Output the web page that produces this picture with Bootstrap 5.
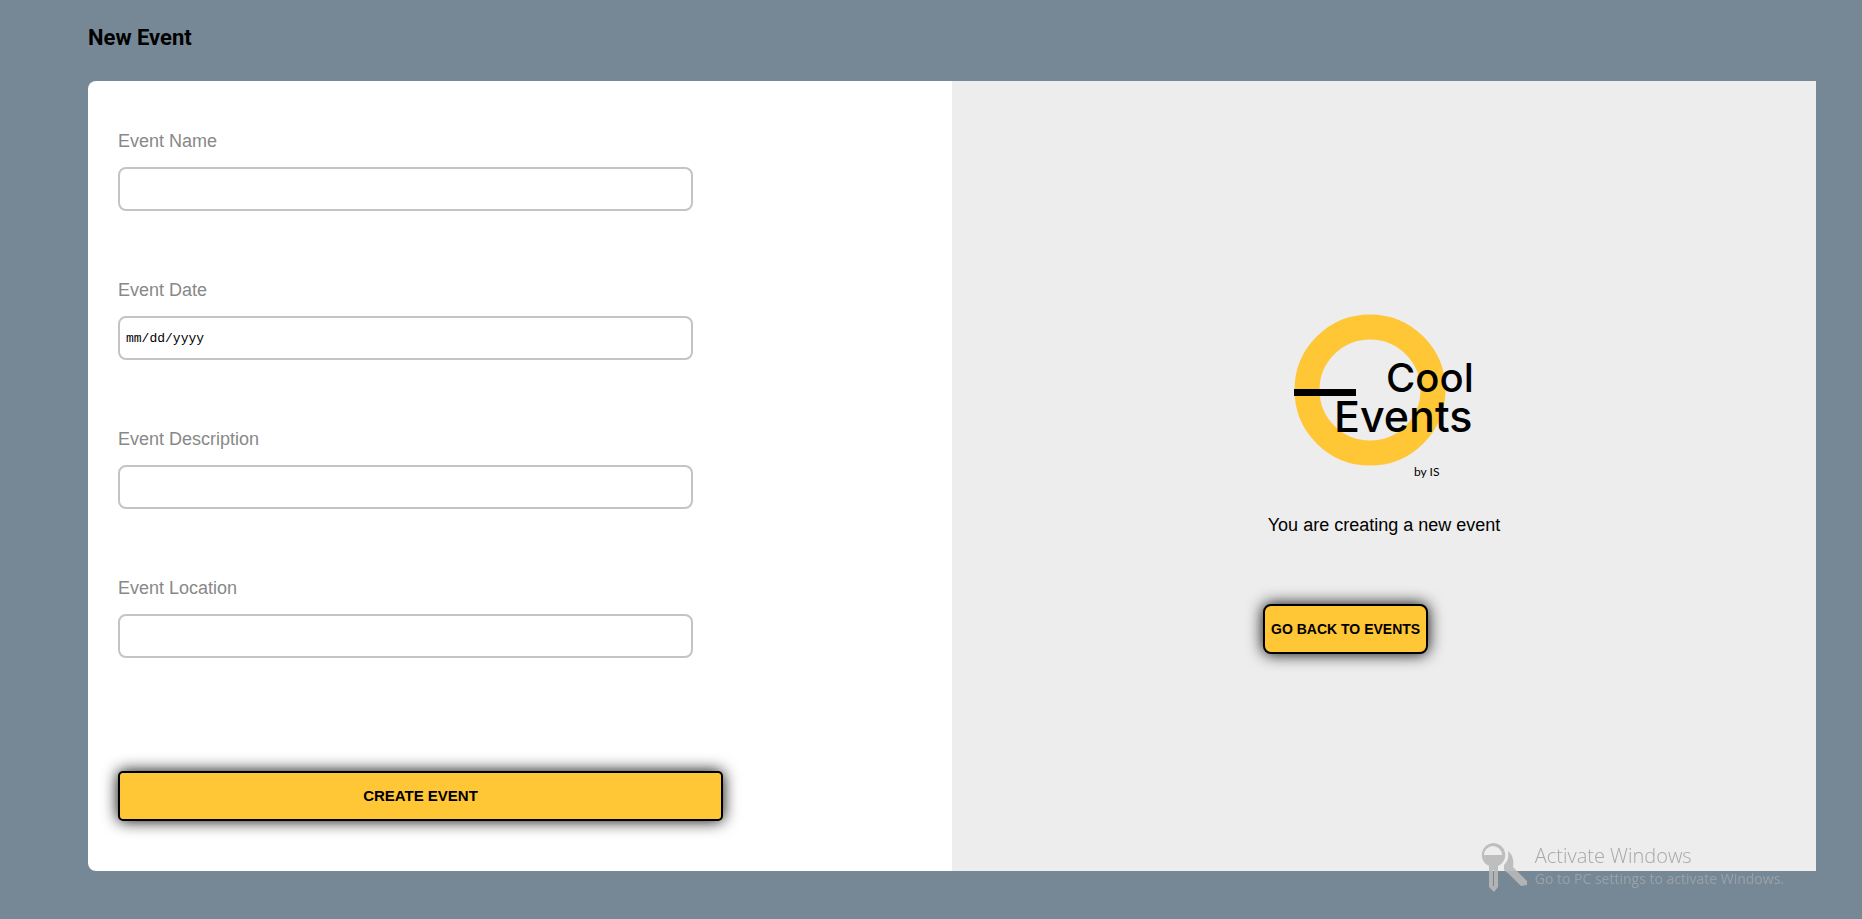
<!DOCTYPE html>
<html lang="en">
<head>
<meta charset="utf-8">
<meta name="viewport" content="width=device-width, initial-scale=1">
<title>New Event</title>
<link href="https://cdn.jsdelivr.net/npm/bootstrap@5.3.0/dist/css/bootstrap.min.css" rel="stylesheet">
<style>
  body { background: #768896; color: #000; font-family: "Liberation Sans", Arial, sans-serif; font-size: 18px; line-height: 24px; }
  .page { padding: 22px 46px 48px 88px; }
  .page-title { font: 700 22px/32px Roboto, sans-serif; margin-bottom: 27px; }
  .event-form { background: #fff; border-radius: 8px 0 0 8px; padding: 48px 0 50px; }
  .event-form form { margin-left: 30px; }
  .field { margin-bottom: 67px; width: 69%; }
  .field .form-label { color: #888; margin-bottom: 14px; display: block; }
  .field .form-control { height: 44px; border: 2px solid #c4c4c4; border-radius: 8px; padding: 1px 6px; color: #000; background: #fff; }
  .field .form-control[type=date] { font: 13px "Liberation Mono", monospace; }
  .form-control::-webkit-calendar-picker-indicator { display: none; }
  .btn-event { height: 50px; background: #ffc636; border: 2px solid #000; color: #000; font-weight: 700; text-transform: uppercase; padding: 0 6px; line-height: 20px; box-shadow: 0 0 16px #000; }
  .btn-event:hover { background: #ffb900; border-color: #000; color: #000; }
  .btn-create { width: 605px; max-width: 100%; font-size: 15px; border-radius: 5px; margin-top: 46px; }
  .btn-back { font-size: 14px; border-radius: 8px; margin-top: 67px; white-space: nowrap; }
  .side { background: #ededed; }
  .side-content { width: 28%; min-width: 240px; }
  .side-logo { margin-bottom: 15px; }
  .watermark { position: fixed; right: 78px; bottom: 24px; color: #b8b8b8; opacity: .9; font-family: "Open Sans", "Segoe UI", sans-serif; pointer-events: none; }
  .watermark-title { font-size: 20px; font-weight: 300; line-height: 26px; color: #a0a0a0; }
  .watermark-note { font-size: 14px; line-height: 20px; opacity: .6; }
</style>
</head>
<body>
<main class="page">
  <h1 class="page-title">New Event</h1>
  <div class="row g-0">
    <section class="col-6 event-form">
      <form>
        <div class="field">
          <label class="form-label" for="name">Event Name</label>
          <input class="form-control" type="text" id="name">
        </div>
        <div class="field">
          <label class="form-label" for="date">Event Date</label>
          <input class="form-control" type="date" id="date">
        </div>
        <div class="field">
          <label class="form-label" for="description">Event Description</label>
          <input class="form-control" type="text" id="description">
        </div>
        <div class="field">
          <label class="form-label" for="location">Event Location</label>
          <input class="form-control" type="text" id="location">
        </div>
        <button type="submit" class="btn btn-event btn-create">Create event</button>
      </form>
    </section>
    <aside class="col-6 side d-flex align-items-center justify-content-center">
      <div class="side-content d-flex flex-column">
        <svg class="side-logo align-self-center" width="182" height="200" viewBox="0 0 182 200" role="img" aria-label="Cool Events by IS">
          <circle cx="77" cy="92" r="63" fill="none" stroke="#ffc636" stroke-width="25"/>
          <path d="M1 91h62v7H1z"/>
          <g font-family="Inter, sans-serif">
            <text x="93" y="94" font-size="40" font-weight="500">Cool</text>
            <text x="41" y="134" font-size="43" font-weight="500">Events</text>
            <text x="121" y="178" font-size="12" font-family="Lato, sans-serif">by IS</text>
          </g>
        </svg>
        <p class="mb-0 text-center text-nowrap">You are creating a new event</p>
        <button type="button" class="btn btn-event btn-back align-self-start">Go back to events</button>
      </div>
    </aside>
  </div>
</main>
<div class="watermark d-flex">
  <svg class="me-2" width="46" height="52" viewBox="0 3 46 52" fill="currentColor" aria-hidden="true">
    <path fill-rule="evenodd" d="M12 3a12 12 0 0 1 5 23v21l-4 5-5-5V26A12 12 0 0 1 12 3zM3 15h18a9 9 0 0 0-18 0zM12 30v16h1V30z"/>
    <path d="M27 11c5 4 6 10 5 16l14 14v4l-6 1L28 34l-5-4v-5c4-4 5-8 4-14z"/>
  </svg>
  <div>
    <div class="watermark-title">Activate Windows</div>
    <div class="watermark-note">Go to PC settings to activate Windows.</div>
  </div>
</div>
<script src="https://cdn.jsdelivr.net/npm/bootstrap@5.3.0/dist/js/bootstrap.bundle.min.js"></script>
</body>
</html>
